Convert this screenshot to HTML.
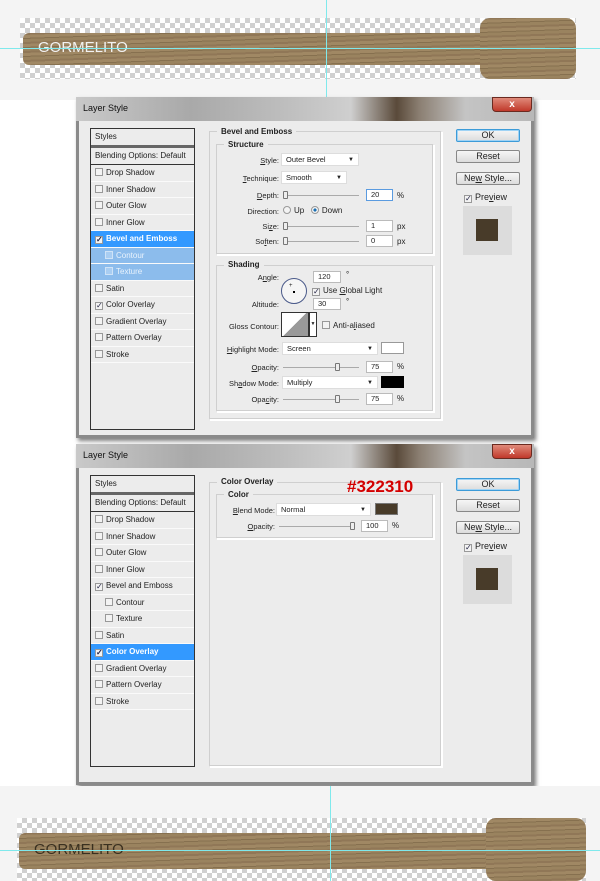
<!DOCTYPE html><html><head><style>
*{margin:0;padding:0;box-sizing:border-box}
body{width:600px;height:881px;position:relative;background:#fff;font-family:"Liberation Sans",sans-serif;font-size:8px;color:#222;overflow:hidden}
.a{position:absolute}
.band{position:absolute;left:0;width:600px;background:#f4f4f4}
.chk{position:absolute;background-color:#fff;background-image:linear-gradient(45deg,#d0d0d0 25%,transparent 25%,transparent 75%,#d0d0d0 75%),linear-gradient(45deg,#d0d0d0 25%,transparent 25%,transparent 75%,#d0d0d0 75%);background-size:10px 10px;background-position:0 0,5px 5px}
.wood{position:absolute;background:repeating-linear-gradient(178deg,#907757 0 2px,#a08864 2px 5px,#86704f 5px 6px,#9a835f 6px 9px);border-radius:6px}
.gv{position:absolute;width:1px;background:#7fe9ec}
.gh{position:absolute;height:1px;background:#7fe9ec}
.dlg{position:absolute;left:76px;width:458px;height:341px;background:#ececec;border:3px solid #8a8a8a;border-top:0;box-shadow:2px 3px 4px rgba(0,0,0,.5)}
.tb{position:absolute;left:-3px;top:0;width:458px;height:24px;background:linear-gradient(90deg,#c9c9c9 0,#a9a9a9 25%,#bdbdbd 45%,#cfcfcf 60%,#5a4a3a 70%,#8b7f72 75%,#c4c4c4 85%,#b8b8b8 100%);font-size:9px;padding:6px 0 0 7px;color:#111}
.x{position:absolute;right:2px;top:0;width:40px;height:15px;background:linear-gradient(#e08a7a,#c0392b);border:1px solid #6b2a20;border-radius:0 0 4px 4px;color:#fff;font-weight:bold;text-align:center;font-size:10px;line-height:13px}
.lp{position:absolute;left:11px;top:31px;width:105px;background:#ececec;border:1px solid #333}
.it{height:16.5px;border-bottom:1px solid #fafafa;padding-left:4px;line-height:16px;white-space:nowrap}
.cb{display:inline-block;width:8px;height:8px;border:1px solid #999;background:#f3f3f3;vertical-align:-1px;margin-right:3px;font-size:8px;line-height:6px;text-align:center;color:#224}
.sel{background:#3399ff;color:#fff;font-weight:bold}
.sub{background:#8cbcec;color:#e8f2fc}
.grp{position:absolute;border:1px solid #cfcfcf;border-right-color:#fff;border-bottom-color:#fff;box-shadow:inset -1px -1px 0 #cfcfcf,1px 1px 0 #fff}
.lg{position:absolute;background:#ececec;font-weight:bold;padding:0 4px;font-size:8px}
.btn{position:absolute;left:377px;width:64px;height:13px;border:1px solid #888;border-radius:2px;background:linear-gradient(#f6f6f6,#dcdcdc);text-align:center;font-size:9px;line-height:11px}
.ok{border-color:#3c9bd8;box-shadow:0 0 0 1px #9fd3f5 inset}
.in{position:absolute;background:#fff;border:1px solid #bbb;height:12px;font-size:7.5px;padding-left:4px;line-height:10px}
.lb{position:absolute;text-align:right;font-size:7.5px}
.sl{position:absolute;height:1px;background:#aaa}
.th{position:absolute;width:5px;height:8px;border:1px solid #777;background:#eee;border-radius:1px}
.dd{position:absolute;background:#fff;border:1px solid #ddd;height:13px;font-size:7.5px;padding-left:4px;line-height:12px}
.dd:after{content:"▼";position:absolute;right:4px;font-size:6px}
</style></head><body>
<div class="band" style="top:0;height:100px"></div>
<div class="chk" style="left:20px;top:18px;width:556px;height:61px"></div>
<div class="wood" style="left:23px;top:33px;width:470px;height:32px"></div>
<div class="wood" style="left:480px;top:18px;width:96px;height:61px;border-radius:10px"></div>
<div class="a" style="left:38px;top:39px;color:#f2f2f2;font-size:15px">GORMELITO</div>
<div class="gv" style="left:326px;top:0;height:100px"></div>
<div class="gh" style="left:0;top:48px;width:600px"></div>

<div class="dlg" style="top:97px">
<div class="tb">Layer Style<div class="x">x</div></div>
<div class="lp" style="height:302px">
<div class="it" style="border-bottom:3px solid #666;height:19px">Styles</div>
<div class="it" style="border-bottom:1px solid #333;height:17px">Blending Options: Default</div>
<div class="it"><span class="cb"></span>Drop Shadow</div>
<div class="it"><span class="cb"></span>Inner Shadow</div>
<div class="it"><span class="cb"></span>Outer Glow</div>
<div class="it"><span class="cb"></span>Inner Glow</div>
<div class="it sel"><span class="cb">✓</span>Bevel and Emboss</div>
<div class="it sub" style="padding-left:14px"><span class="cb" style="background:#a8cdf2;border-color:#cfe3f7"></span>Contour</div>
<div class="it sub" style="padding-left:14px"><span class="cb" style="background:#a8cdf2;border-color:#cfe3f7"></span>Texture</div>
<div class="it"><span class="cb"></span>Satin</div>
<div class="it"><span class="cb">✓</span>Color Overlay</div>
<div class="it"><span class="cb"></span>Gradient Overlay</div>
<div class="it"><span class="cb"></span>Pattern Overlay</div>
<div class="it"><span class="cb"></span>Stroke</div>
</div>
<div class="grp" style="left:130px;top:34px;width:233px;height:289px"></div>
<div class="lg" style="left:138px;top:30px">Bevel and Emboss</div>
<div class="grp" style="left:137px;top:47px;width:218px;height:111px"></div>
<div class="lg" style="left:145px;top:43px">Structure</div>
<div class="lb" style="left:150px;width:50px;top:59px"><u>S</u>tyle:</div><div class="dd" style="left:202px;top:56px;width:78px">Outer Bevel</div>
<div class="lb" style="left:150px;width:50px;top:77px"><u>T</u>echnique:</div><div class="dd" style="left:202px;top:74px;width:66px">Smooth</div>
<div class="lb" style="left:150px;width:50px;top:94px"><u>D</u>epth:</div><div class="sl" style="left:204px;top:98px;width:76px"></div><div class="th" style="left:204px;top:94px"></div><div class="in" style="left:287px;top:92px;width:27px;border-color:#5a9be0">20</div><div class="a" style="left:318px;top:94px">%</div>
<div class="lb" style="left:120px;width:80px;top:110px">Direction:</div><div class="a" style="left:204px;top:109px"><span class="cb" style="border-radius:50%"></span>Up &nbsp; <span class="cb" style="border-radius:50%;background:radial-gradient(#1a6fb3 35%,#f3f3f3 40%)"></span>Down</div>
<div class="lb" style="left:150px;width:50px;top:125px">Si<u>z</u>e:</div><div class="sl" style="left:204px;top:129px;width:76px"></div><div class="th" style="left:204px;top:125px"></div><div class="in" style="left:287px;top:123px;width:27px">1</div><div class="a" style="left:318px;top:125px">px</div>
<div class="lb" style="left:150px;width:50px;top:140px">So<u>f</u>ten:</div><div class="sl" style="left:204px;top:144px;width:76px"></div><div class="th" style="left:204px;top:140px"></div><div class="in" style="left:287px;top:138px;width:27px">0</div><div class="a" style="left:318px;top:140px">px</div>
<div class="grp" style="left:137px;top:168px;width:218px;height:147px"></div>
<div class="lg" style="left:145px;top:163px">Shading</div>
<div class="lb" style="left:150px;width:50px;top:176px">A<u>n</u>gle:</div>
<div class="a" style="left:202px;top:181px;width:26px;height:26px;border:1px solid #4a5a8a;border-radius:50%;background:#f5f5f5"><div class="a" style="left:11px;top:12px;width:2px;height:2px;background:#000"></div><div class="a" style="left:7px;top:4px;font-size:6px">+</div></div>
<div class="in" style="left:234px;top:174px;width:28px">120</div><div class="a" style="left:267px;top:173px">°</div>
<div class="a" style="left:233px;top:189px"><span class="cb">✓</span>Use <u>G</u>lobal Light</div>
<div class="lb" style="left:150px;width:50px;top:203px">Altitude:</div><div class="in" style="left:234px;top:201px;width:28px">30</div><div class="a" style="left:267px;top:200px">°</div>
<div class="lb" style="left:130px;width:70px;top:225px">Gloss Contour:</div>
<div class="a" style="left:202px;top:215px;width:28px;height:25px;border:1px solid #333;background:linear-gradient(135deg,#fff 50%,#999 50%)"></div><div class="a" style="left:230px;top:215px;width:8px;height:25px;border:1px solid #333;background:#fff;font-size:5px;line-height:23px;text-align:center">▼</div>
<div class="a" style="left:243px;top:224px"><span class="cb"></span>Anti-a<u>l</u>iased</div>
<div class="lb" style="left:130px;width:70px;top:248px"><u>H</u>ighlight Mode:</div><div class="dd" style="left:203px;top:245px;width:96px">Screen</div><div class="a" style="left:302px;top:245px;width:23px;height:12px;background:#fff;border:1px solid #999"></div>
<div class="lb" style="left:150px;width:50px;top:266px"><u>O</u>pacity:</div><div class="sl" style="left:204px;top:270px;width:76px"></div><div class="th" style="left:256px;top:266px"></div><div class="in" style="left:287px;top:264px;width:27px">75</div><div class="a" style="left:318px;top:265px">%</div>
<div class="lb" style="left:130px;width:70px;top:282px">Sh<u>a</u>dow Mode:</div><div class="dd" style="left:203px;top:279px;width:96px">Multiply</div><div class="a" style="left:302px;top:279px;width:23px;height:12px;background:#000"></div>
<div class="lb" style="left:150px;width:50px;top:298px">Opa<u>c</u>ity:</div><div class="sl" style="left:204px;top:302px;width:76px"></div><div class="th" style="left:256px;top:298px"></div><div class="in" style="left:287px;top:296px;width:27px">75</div><div class="a" style="left:318px;top:297px">%</div>
<div class="btn ok" style="top:32px">OK</div>
<div class="btn" style="top:53px">Reset</div>
<div class="btn" style="top:75px">Ne<u>w</u> Style...</div>
<div class="a" style="left:385px;top:95px;font-size:9px"><span class="cb">✓</span>Pre<u>v</u>iew</div>
<div class="a" style="left:384px;top:109px;width:49px;height:49px;background:#dcdcdc"><div class="a" style="left:13px;top:13px;width:22px;height:22px;background:#483b29"></div></div>
</div>

<div class="dlg" style="top:444px">
<div class="tb">Layer Style<div class="x">x</div></div>
<div class="lp" style="height:292px">
<div class="it" style="border-bottom:3px solid #666;height:19px">Styles</div>
<div class="it" style="border-bottom:1px solid #333;height:17px">Blending Options: Default</div>
<div class="it"><span class="cb"></span>Drop Shadow</div>
<div class="it"><span class="cb"></span>Inner Shadow</div>
<div class="it"><span class="cb"></span>Outer Glow</div>
<div class="it"><span class="cb"></span>Inner Glow</div>
<div class="it"><span class="cb">✓</span>Bevel and Emboss</div>
<div class="it" style="padding-left:14px"><span class="cb"></span>Contour</div>
<div class="it" style="padding-left:14px"><span class="cb"></span>Texture</div>
<div class="it"><span class="cb"></span>Satin</div>
<div class="it sel"><span class="cb">✓</span>Color Overlay</div>
<div class="it"><span class="cb"></span>Gradient Overlay</div>
<div class="it"><span class="cb"></span>Pattern Overlay</div>
<div class="it"><span class="cb"></span>Stroke</div>
</div>
<div class="grp" style="left:130px;top:38px;width:233px;height:285px"></div>
<div class="lg" style="left:138px;top:33px">Color Overlay</div>
<div class="grp" style="left:137px;top:50px;width:218px;height:45px"></div>
<div class="lg" style="left:145px;top:46px">Color</div>
<div class="a" style="left:268px;top:33px;color:#d40000;font-size:17px;font-weight:bold">#322310</div>
<div class="lb" style="left:130px;width:66px;top:62px"><u>B</u>lend Mode:</div><div class="dd" style="left:197px;top:59px;width:95px">Normal</div><div class="a" style="left:296px;top:59px;width:23px;height:12px;background:#483b29;border:1px solid #777"></div>
<div class="lb" style="left:130px;width:66px;top:78px"><u>O</u>pacity:</div><div class="sl" style="left:200px;top:82px;width:76px"></div><div class="th" style="left:271px;top:78px"></div><div class="in" style="left:282px;top:76px;width:27px">100</div><div class="a" style="left:313px;top:77px">%</div>
<div class="btn ok" style="top:34px">OK</div>
<div class="btn" style="top:55px">Reset</div>
<div class="btn" style="top:77px">Ne<u>w</u> Style...</div>
<div class="a" style="left:385px;top:97px;font-size:9px"><span class="cb">✓</span>Pre<u>v</u>iew</div>
<div class="a" style="left:384px;top:111px;width:49px;height:49px;background:#dcdcdc"><div class="a" style="left:13px;top:13px;width:22px;height:22px;background:#483b29"></div></div>
</div>

<div class="band" style="top:786px;height:95px"></div>
<div class="chk" style="left:17px;top:818px;width:569px;height:63px"></div>
<div class="wood" style="left:19px;top:833px;width:480px;height:36px"></div>
<div class="wood" style="left:486px;top:818px;width:100px;height:63px;border-radius:10px"></div>
<div class="a" style="left:34px;top:841px;color:#3a3020;font-size:15px">GORMELITO</div>
<div class="gv" style="left:330px;top:786px;height:95px"></div>
<div class="gh" style="left:0;top:850px;width:600px"></div>
</body></html>
